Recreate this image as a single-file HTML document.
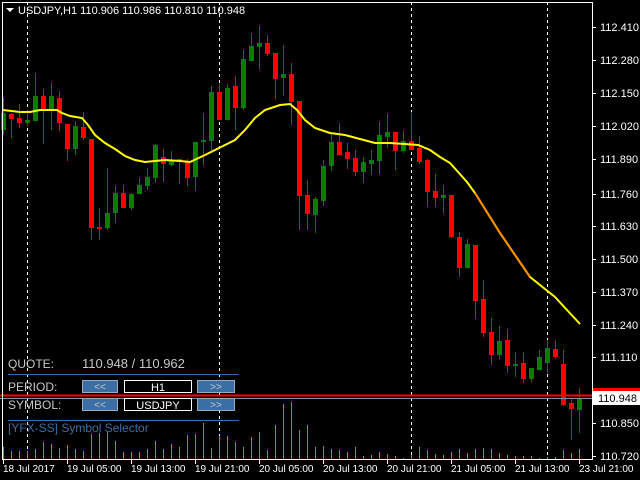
<!DOCTYPE html>
<html><head><meta charset="utf-8"><style>
html,body{margin:0;padding:0;background:#000;width:640px;height:480px;overflow:hidden}
svg{display:block}
text{font-family:"Liberation Sans","DejaVu Sans",sans-serif}
</style></head><body>
<svg id="s" width="640" height="480" xmlns="http://www.w3.org/2000/svg">
<rect width="640" height="480" fill="#000"/>
<g id="grid" stroke="#fff" stroke-width="1" stroke-dasharray="3,3">
<line x1="27.5" y1="2" x2="27.5" y2="459"/><line x1="219.5" y1="2" x2="219.5" y2="459"/><line x1="411.5" y1="2" x2="411.5" y2="459"/><line x1="547.5" y1="2" x2="547.5" y2="459"/>
</g>
<g id="vol" stroke="#22c322" stroke-width="1"></g>
<g id="cand"></g>
<polyline id="ma" fill="none" stroke="#ffff00" stroke-width="2"/>
<polyline id="ma2" fill="none" stroke="#ff8c00" stroke-width="2"/>
<line x1="0" y1="395.5" x2="592" y2="395.5" stroke="#ff0000" stroke-width="2"/>
<line x1="0" y1="398.5" x2="592" y2="398.5" stroke="#8090a0" stroke-width="1"/>
<!-- frame -->
<line x1="2.5" y1="2" x2="2.5" y2="459" stroke="#fff"/>
<line x1="2" y1="2.5" x2="592" y2="2.5" stroke="#fff"/>
<line x1="592.5" y1="2" x2="592.5" y2="460" stroke="#fff"/>
<line x1="2" y1="459.5" x2="593" y2="459.5" stroke="#fff"/>
<g id="axis" fill="#fff" font-size="11"></g>
<rect x="593" y="388" width="47" height="8" fill="#ff0000"/>
<rect x="593" y="391" width="47" height="14" fill="#fff"/>
<text x="598" y="402" font-size="11" fill="#000">110.948</text>
<!-- header -->
<polygon points="6,8 14,8 10,12" fill="#fff"/>
<text x="18" y="14" font-size="11" fill="#fff">USDJPY,H1  110.906 110.986 110.810 110.948</text>
<!-- panel -->
<text x="8" y="368" font-size="12" fill="#c8c8c8">QUOTE:</text>
<text x="82" y="368" font-size="13" fill="#c8c8c8">110.948 / 110.962</text>
<line x1="8" y1="374.5" x2="239" y2="374.5" stroke="#3a6ea5"/>
<text x="8" y="391" font-size="12" fill="#c8c8c8">PERIOD:</text>
<rect x="82.5" y="380.5" width="35" height="12" fill="#3a6ea5" stroke="#9ab"/>
<text x="100" y="390" font-size="10" fill="#c8c8c8" text-anchor="middle">&lt;&lt;</text>
<rect x="124.5" y="380.5" width="67" height="12" fill="#000" stroke="#fff"/>
<text x="158" y="391" font-size="11" fill="#fff" text-anchor="middle">H1</text>
<rect x="197.5" y="380.5" width="37" height="12" fill="#3a6ea5" stroke="#9ab"/>
<text x="216" y="390" font-size="10" fill="#c8c8c8" text-anchor="middle">&gt;&gt;</text>
<text x="8" y="409" font-size="12" fill="#c8c8c8">SYMBOL:</text>
<rect x="82.5" y="398.5" width="35" height="12" fill="#3a6ea5" stroke="#9ab"/>
<text x="100" y="408" font-size="10" fill="#c8c8c8" text-anchor="middle">&lt;&lt;</text>
<rect x="124.5" y="398.5" width="67" height="12" fill="#000" stroke="#fff"/>
<text x="158" y="409" font-size="11" fill="#fff" text-anchor="middle">USDJPY</text>
<rect x="197.5" y="398.5" width="37" height="12" fill="#3a6ea5" stroke="#9ab"/>
<text x="216" y="408" font-size="10" fill="#c8c8c8" text-anchor="middle">&gt;&gt;</text>
<line x1="8" y1="420.5" x2="239" y2="420.5" stroke="#3a6ea5"/>
<text x="8" y="432" font-size="12" fill="#3a6ea5">[YFX-SS] Symbol Selector</text>
</svg>
<script>
var NS="http://www.w3.org/2000/svg";
function el(t,a,p){var e=document.createElementNS(NS,t);for(var k in a)e.setAttribute(k,a[k]);p.appendChild(e);return e;}
// [bodyTop, bodyBot, wickTop, wickBot, green?]
var C=[[113,130,98,135,1],[114,119,113,138,0],[118,123,104,128,0],[120,123,110,126,1],[96,121,73,121,1],[96,110,89,144,0],[96,110,83,130,1],[98,123,91,131,0],[124,149,124,161,0],[126,149,121,155,1],[127,138,112,140,0],[139,228,139,240,0],[227,229,208,240,0],[213,228,168,230,1],[193,213,186,223,1],[193,208,185,208,0],[194,208,193,210,1],[185,194,178,190,1],[177,186,168,190,1],[145,178,144,183,1],[157,164,149,182,0],[160,165,151,166,1],[159,161,159,184,0],[162,178,159,186,0],[142,177,142,191,1],[140,142,113,165,1],[92,141,86,152,1],[92,120,84,120,0],[88,120,84,120,1],[86,108,76,130,0],[59,108,50,110,1],[46,61,33,61,1],[43,47,26,69,1],[43,54,35,56,0],[53,79,53,99,0],[74,78,45,96,1],[74,102,63,125,0],[101,196,101,230,0],[195,214,180,230,0],[199,215,197,233,1],[166,201,160,206,1],[142,166,133,171,1],[142,155,123,155,0],[152,159,143,169,0],[158,172,150,176,0],[162,172,157,183,1],[160,164,150,175,1],[135,161,122,174,1],[132,137,114,148,1],[132,151,132,170,0],[141,151,131,153,1],[141,150,112,150,0],[148,162,136,164,0],[160,192,159,207,0],[191,198,174,207,0],[195,198,185,213,1],[195,237,195,238,0],[237,268,232,277,0],[244,268,239,268,1],[245,301,245,319,0],[299,333,280,337,0],[332,355,318,365,0],[341,355,326,359,1],[340,366,329,373,0],[364,366,352,377,1],[363,379,352,383,0],[368,379,368,382,1],[357,370,350,370,1],[348,363,340,373,1],[349,357,340,359,0],[364,405,350,406,0],[403,409,399,440,0],[398,410,388,433,1]];
var V=[447,451,451,451,449,442,444,448,445,449,451,434,433,432,441,452,452,452,449,441,449,444,447,435,434,423,448,436,436,442,447,437,432,450,425,404,402,430,425,447,446,449,450,452,447,456,455,452,454,456,458,455,447,450,454,455,452,449,453,449,448,449,453,455,456,456,456,458,457,457,450,453,449];
var cg=document.getElementById('cand'),vg=document.getElementById('vol');
C.forEach(function(c,k){var x=3+8*k;var col=c[4]?'#008000':'#ff0000';
el('rect',{x:x,y:c[2],width:1,height:c[3]-c[2],fill:col},cg);
el('rect',{x:x-2,y:c[0],width:5,height:Math.max(2,c[1]-c[0]),fill:col},cg);
el('line',{x1:x+0.5,y1:V[k],x2:x+0.5,y2:459,stroke:'#22c322'},vg);});
var P=[[3,110],[20,112],[30,112],[40,110],[57,110],[62,113],[70,116],[82,118],[88,125],[95,135],[105,143],[115,149],[125,156],[135,160],[145,162],[155,161],[165,160],[180,161],[190,162],[205,155],[215,150],[225,145],[235,140],[245,130],[255,118],[265,110],[280,105],[290,104],[297,110],[305,120],[315,128],[330,133],[345,135],[360,139],[375,143],[390,143],[405,144],[418,145],[430,150],[440,157],[450,163],[467,182],[475,193],[500,233],[530,277],[540,285],[555,297],[567,310],[580,324]];
var s=P.map(function(p){return p.join(',')}).join(' ');
document.getElementById('ma').setAttribute('points',s);
document.getElementById('ma2').setAttribute('points',P.filter(function(p){return p[0]>=475&&p[0]<=530}).map(function(p){return p.join(',')}).join(' '));
var ax=document.getElementById('axis');
[[27,'112.410'],[60,'112.280'],[93,'112.150'],[126,'112.020'],[159,'111.890'],[194,'111.760'],[226,'111.630'],[259,'111.500'],[292,'111.370'],[325,'111.240'],[357,'111.110'],[423,'110.850'],[456,'110.720']].forEach(function(a){
el('line',{x1:592,y1:a[0]+0.5,x2:596,y2:a[0]+0.5,stroke:'#fff'},ax);
var t=el('text',{x:600,y:a[0]+4},ax);t.textContent=a[1];});
[[3,'18 Jul 2017'],[67,'19 Jul 05:00'],[131,'19 Jul 13:00'],[195,'19 Jul 21:00'],[259,'20 Jul 05:00'],[323,'20 Jul 13:00'],[387,'20 Jul 21:00'],[451,'21 Jul 05:00'],[515,'21 Jul 13:00'],[579,'23 Jul 21:00']].forEach(function(a){
el('line',{x1:a[0]+0.5,y1:459,x2:a[0]+0.5,y2:464,stroke:'#fff'},ax);
var t=el('text',{x:a[0],y:472,'font-size':'10'},ax);t.textContent=a[1];});
</script>
</body></html>
